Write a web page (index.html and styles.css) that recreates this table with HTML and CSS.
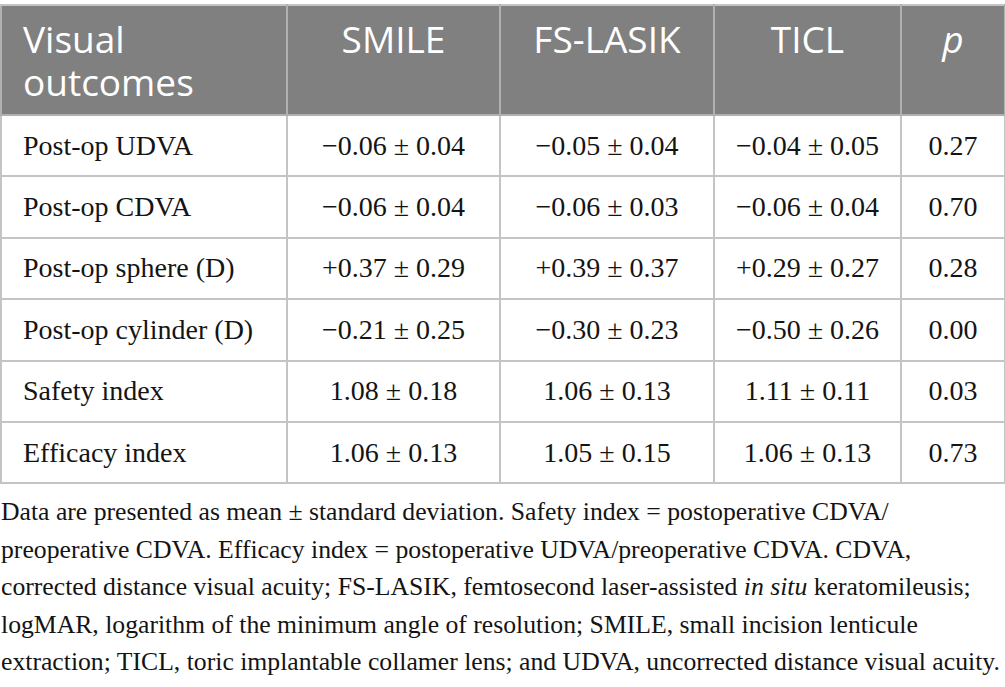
FILE: index.html
```html
<!DOCTYPE html>
<html>
<head>
<meta charset="utf-8">
<link rel="stylesheet" href="styles.css">
</head>
<body>
<table class="data">
  <colgroup>
    <col class="c1"><col class="c2"><col class="c3"><col class="c4"><col class="c5">
  </colgroup>
  <thead>
    <tr>
      <th class="first">Visual outcomes</th>
      <th>SMILE</th>
      <th>FS-LASIK</th>
      <th>TICL</th>
      <th><i>p</i></th>
    </tr>
  </thead>
  <tbody>
    <tr><td class="first">Post-op UDVA</td><td>−0.06 ± 0.04</td><td>−0.05 ± 0.04</td><td>−0.04 ± 0.05</td><td>0.27</td></tr>
    <tr><td class="first">Post-op CDVA</td><td>−0.06 ± 0.04</td><td>−0.06 ± 0.03</td><td>−0.06 ± 0.04</td><td>0.70</td></tr>
    <tr><td class="first">Post-op sphere (D)</td><td>+0.37 ± 0.29</td><td>+0.39 ± 0.37</td><td>+0.29 ± 0.27</td><td>0.28</td></tr>
    <tr><td class="first">Post-op cylinder (D)</td><td>−0.21 ± 0.25</td><td>−0.30 ± 0.23</td><td>−0.50 ± 0.26</td><td>0.00</td></tr>
    <tr><td class="first">Safety index</td><td>1.08 ± 0.18</td><td>1.06 ± 0.13</td><td>1.11 ± 0.11</td><td>0.03</td></tr>
    <tr><td class="first">Efficacy index</td><td>1.06 ± 0.13</td><td>1.05 ± 0.15</td><td>1.06 ± 0.13</td><td>0.73</td></tr>
  </tbody>
</table>
<p class="note">Data are presented as mean ± standard deviation. Safety index = postoperative CDVA/<br>preoperative CDVA. Efficacy index = postoperative UDVA/preoperative CDVA. CDVA,<br>corrected distance visual acuity; FS-LASIK, femtosecond laser-assisted <i>in situ</i> keratomileusis;<br>logMAR, logarithm of the minimum angle of resolution; SMILE, small incision lenticule<br>extraction; TICL, toric implantable collamer lens; and UDVA, uncorrected distance visual acuity.</p>
</body>
</html>
```

FILE: styles.css
```css
html, body {
  margin: 0;
  padding: 0;
  background: #ffffff;
}
body {
  padding-top: 4px;
}
.data {
  border-collapse: collapse;
  width: 1004px;
  table-layout: fixed;
}
.c1 { width: 286px; }
.c2 { width: 213px; }
.c3 { width: 214px; }
.c4 { width: 187px; }
.c5 { width: 104px; }
.data th {
  background: #808080;
  color: #ffffff;
  font-family: "Open Sans", sans-serif;
  font-weight: normal;
  font-size: 37px;
  line-height: 43px;
  text-align: center;
  vertical-align: top;
  padding: 11px 4px 11px 4px;
  border: 2px solid #b0b0b0;
  border-top-color: #c4c4c4;
}
.data th.first {
  text-align: left;
  padding-left: 21px;
  padding-right: 30px;
}
.data td {
  font-family: "Liberation Serif", "Times New Roman", serif;
  font-size: 28px;
  color: #141414;
  text-align: center;
  vertical-align: middle;
  height: 59.4px;
  padding: 0 4px;
  border: 2px solid #c4c4c4;
}
.data td.first {
  text-align: left;
  padding-left: 21px;
}
.note {
  margin: 9px 0 0 1px;
  font-family: "Liberation Serif", "Times New Roman", serif;
  font-size: 25.7px;
  line-height: 37.4px;
  color: #141414;
}
```
